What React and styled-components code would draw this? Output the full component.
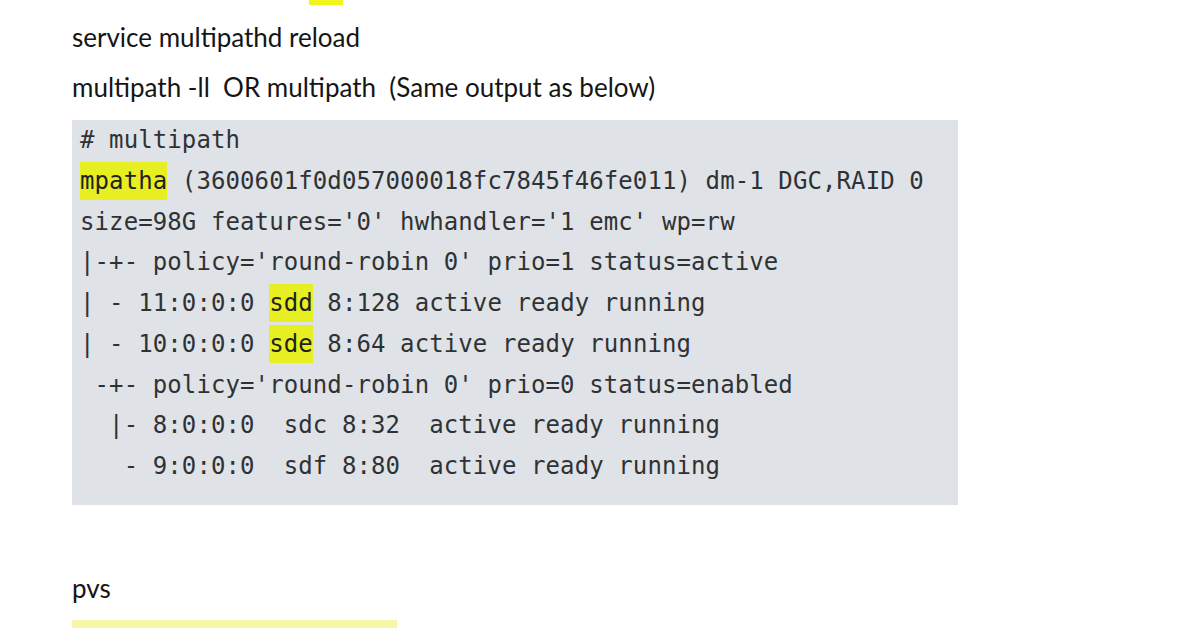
import React from "react";
import styled, { createGlobalStyle } from "styled-components";

const GlobalStyle = createGlobalStyle`
  html, body {
    margin: 0;
    padding: 0;
    background: #ffffff;
  }
  body {
    width: 1196px;
    height: 628px;
    overflow: hidden;
  }
`;

const Page = styled.div`
  padding: 0 0 0 72px;
  margin-top: -38px;
  font-family: Lato, "Open Sans", sans-serif;
  color: #151515;
`;

const Para = styled.p`
  margin: 0;
  height: 50px;
  line-height: 50px;
  font-size: 26px;
  white-space: pre;
`;

const Mark = styled.mark`
  background: ${(p) => (p.soft ? "#f6f7a8" : "#f0f51c")};
  color: inherit;
  padding: 2px 0;
`;

const CodeBlock = styled.pre`
  margin: 8px 0 58px 0;
  width: 886px;
  box-sizing: border-box;
  padding: 0 8px 18px;
  background: #dfe2e6;
  font-family: "DejaVu Sans Mono", "Liberation Mono", monospace;
  font-size: 24px;
  line-height: 40.75px;
  color: #2f3235;
  letter-spacing: 0.1px;
`;

const CodeMark = styled.span`
  background: #e7ee22;
  color: #222;
  padding: 5px 0;
`;

const lines = [
  ["# multipath"],
  [<CodeMark key="m">mpatha</CodeMark>, " (3600601f0d057000018fc7845f46fe011) dm-1 DGC,RAID 0"],
  ["size=98G features='0' hwhandler='1 emc' wp=rw"],
  ["|-+- policy='round-robin 0' prio=1 status=active"],
  ["| - 11:0:0:0 ", <CodeMark key="d">sdd</CodeMark>, " 8:128 active ready running"],
  ["| - 10:0:0:0 ", <CodeMark key="e">sde</CodeMark>, " 8:64 active ready running"],
  [" -+- policy='round-robin 0' prio=0 status=enabled"],
  ["  |- 8:0:0:0  sdc 8:32  active ready running"],
  ["   - 9:0:0:0  sdf 8:80  active ready running"],
];

export default function App() {
  return (
    <>
      <GlobalStyle />
      <Page>
        <Para>Add the wwid in the <Mark>file</Mark></Para>
        <Para>service multipathd reload</Para>
        <Para>multipath -ll  OR multipath  (Same output as below)</Para>
        <CodeBlock>
          {lines.map((parts, i) => (
            <div key={i}>{parts}</div>
          ))}
        </CodeBlock>
        <Para>pvs</Para>
        <Para>
          <Mark soft>PV /dev/mapper/mpatha VG</Mark>
        </Para>
      </Page>
    </>
  );
}
